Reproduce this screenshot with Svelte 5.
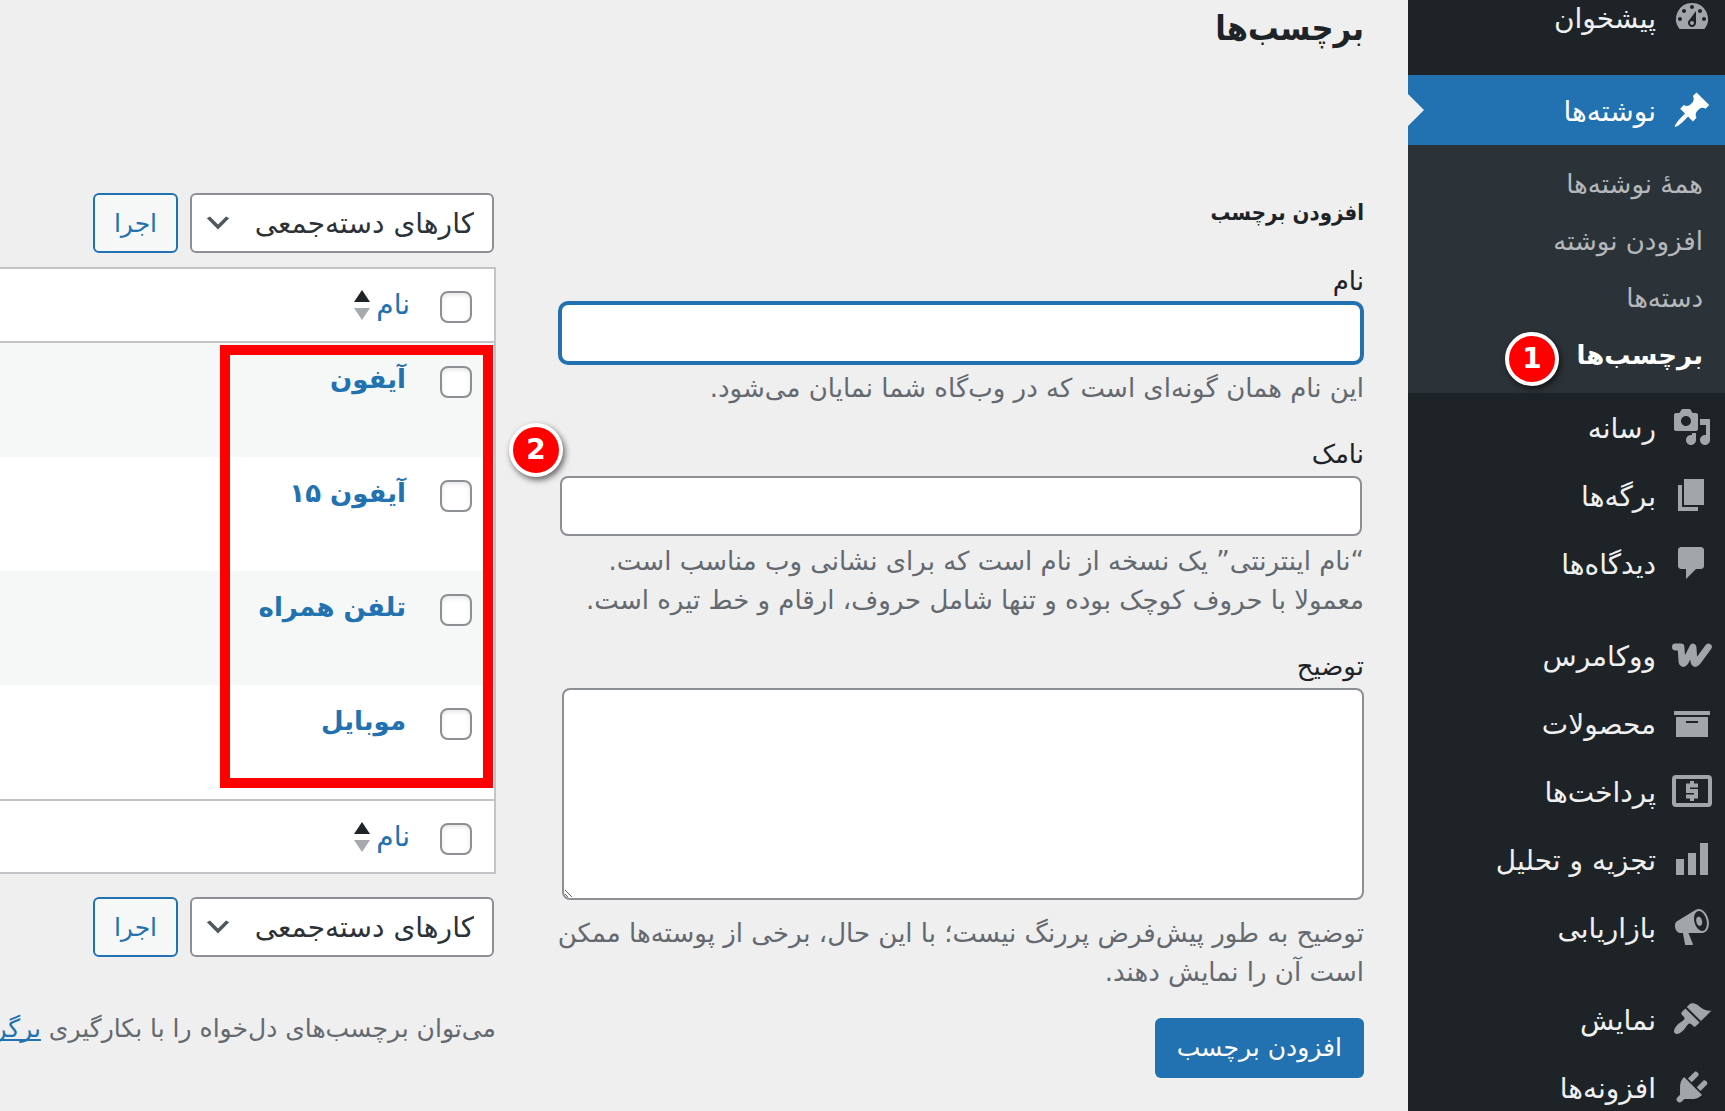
<script>
  const menu = [
    { label: "پیشخوان", icon: "dashboard" },
    { separator: true },
    {
      label: "نوشته‌ها",
      icon: "post",
      current: true,
      children: ["همهٔ نوشته‌ها", "افزودن نوشته", "دسته‌ها", "برچسب‌ها"],
    },
    { label: "رسانه", icon: "media" },
    { label: "برگه‌ها", icon: "page" },
    { label: "دیدگاه‌ها", icon: "comments" },
    { separator: true },
    { label: "ووکامرس", icon: "woo" },
    { label: "محصولات", icon: "archive" },
    { label: "پرداخت‌ها", icon: "payments" },
    { label: "تجزیه و تحلیل", icon: "chart" },
    { label: "بازاریابی", icon: "megaphone" },
    { separator: true },
    { label: "نمایش", icon: "appearance" },
    { label: "افزونه‌ها", icon: "plugins" },
  ]

  const currentChild = "برچسب‌ها"

  const icons = {
    dashboard: "M3.76 16h12.48A7.998 7.998 0 0 0 10 3a7.998 7.998 0 0 0-6.24 13zM10 4c.55 0 1 .45 1 1s-.45 1-1 1-1-.45-1-1 .45-1 1-1zM6 6c.55 0 1 .45 1 1s-.45 1-1 1-1-.45-1-1 .45-1 1-1zm8 0c.55 0 1 .45 1 1s-.45 1-1 1-1-.45-1-1 .45-1 1-1zm-5.37 5.55L12 7v6c0 1.1-.9 2-2 2s-2-.9-2-2c0-.57.24-1.08.63-1.45zM4 10c.55 0 1 .45 1 1s-.45 1-1 1-1-.45-1-1 .45-1 1-1zm12 0c.55 0 1 .45 1 1s-.45 1-1 1-1-.45-1-1 .45-1 1-1zm-5 3c0-.55-.45-1-1-1s-1 .45-1 1 .45 1 1 1 1-.45 1-1z",
    post: "M10.44 3.02l1.82-1.82 6.36 6.35-1.83 1.82c-1.05-.68-2.48-.57-3.41.36l-.75.75c-.92.93-1.04 2.35-.35 3.41l-1.83 1.82-2.41-2.41-2.8 2.79c-.42.42-3.38 2.71-3.8 2.29s1.86-3.39 2.28-3.81l2.79-2.79L4.1 9.36l1.83-1.82c1.05.69 2.48.57 3.4-.36l.75-.75c.93-.92 1.05-2.35.36-3.41z",
    media: "M13 11V4c0-.55-.45-1-1-1h-1.67L9 1H5L3.67 3H2c-.55 0-1 .45-1 1v7c0 .55.45 1 1 1h10c.55 0 1-.45 1-1zM7 4.5c1.38 0 2.5 1.12 2.5 2.5S8.38 9.5 7 9.5 4.5 8.38 4.5 7 5.62 4.5 7 4.5zM14 6h5v10.5c0 1.38-1.12 2.5-2.5 2.5S14 17.88 14 16.5s1.12-2.5 2.5-2.5c.17 0 .34.02.5.05V9h-3V6zm-4 8.05V13h2v3.5c0 1.38-1.12 2.5-2.5 2.5S7 17.88 7 16.5 8.12 14 9.5 14c.17 0 .34.02.5.05z",
    page: "M6 15V2h10v13H6zm-1 1h8v2H3V5h2v11z",
    comments: "M4.5 2h10c.83 0 1.5.67 1.5 1.5v8c0 .83-.67 1.5-1.5 1.5H12l-5 5v-5H4.5c-.83 0-1.5-.67-1.5-1.5v-8C3 2.67 3.67 2 4.5 2z",
    archive: "M19 4v2H1V4h18zM2 7h16v10H2V7zm11 3V9H7v1h6z",
    chart: "M18 18V2h-4v16h4zm-6 0V7H8v11h4zm-6 0v-8H2v8h4z",
    megaphone: "M18.15 5.94c.46 1.62.38 3.22-.02 4.48-.42 1.28-1.26 2.18-2.3 2.48-.16.06-.26.06-.4.06-.06.02-.12.02-.18.02-.06.02-.14.02-.22.02h-6.8l2.22 5.5c.02.14-.06.26-.14.34-.08.1-.24.16-.34.16H6.95c-.1 0-.26-.06-.34-.16-.08-.08-.16-.2-.14-.34l-1-5.5H4.25l-.02-.02c-.5.06-1.08-.18-1.54-.62s-.88-1.08-1.06-1.88c-.24-.8-.2-1.56-.02-2.2.18-.62.58-1.08 1.06-1.3l.02-.02 9-5.4c.1-.06.18-.1.24-.16.06-.04.14-.08.24-.12.16-.08.28-.12.5-.18 1.04-.3 2.24.1 3.22.98s1.84 2.24 2.26 3.86zm-2.58 5.98h-.02c.4-.1.74-.34 1.04-.7.58-.7.86-1.76.86-3.04 0-.64-.1-1.3-.28-1.98-.34-1.36-1.02-2.5-1.78-3.24s-1.68-1.1-2.46-.88c-.82.22-1.4.96-1.7 2-.32 1.04-.28 2.36.06 3.72.38 1.36 1 2.5 1.8 3.24.78.74 1.62 1.1 2.48.88zm-2.54-7.08c.22-.04.42-.02.62.04.38.16.76.48 1.02 1s.42 1.2.42 1.78c0 .3-.04.56-.12.8-.18.48-.44.84-.86.94-.34.1-.8-.06-1.14-.4s-.64-.86-.78-1.5c-.18-.62-.12-1.24.02-1.72s.48-.84.82-.94z",
    appearance: "M14.48 11.06L7.41 3.99l1.5-1.5c.5-.56 2.3-.47 3.51.32 1.21.8 1.43 1.28 2.91 2.1 1.18.64 2.45 1.26 4.45.85zm-.71.71L6.7 4.7 4.93 6.47c-.39.39-.39 1.02 0 1.41l1.06 1.06c.39.39.39 1.03 0 1.42-.6.6-1.43 1.11-2.21 1.69-.35.26-.7.53-1.01.84C1.43 14.23.4 16.08 1.4 17.07c.99 1 2.84-.03 4.18-1.36.31-.31.58-.66.85-1.02.57-.78 1.08-1.61 1.69-2.21.39-.39 1.02-.39 1.41 0l1.06 1.06c.39.39 1.02.39 1.41 0z",
    plugins: "M13.11 4.36L9.87 7.6 8 5.73l3.24-3.24c.35-.34 1.05-.2 1.56.32.52.51.66 1.21.31 1.55zm-8 1.77l.91-1.12 9.01 9.01-1.19.84c-.71.71-2.63 1.16-3.82 1.16H6.14L4.9 17.26c-.59.59-1.54.59-2.12 0a1.49 1.49 0 0 1 0-2.12l1.24-1.24v-3.88c0-1.13.4-3.19 1.09-3.89zm7.26 3.97l3.24-3.24c.34-.35 1.04-.21 1.55.31.52.51.66 1.21.31 1.55l-3.24 3.25z",
  }

  const tags = ["آیفون", "آیفون ۱۵", "تلفن همراه", "موبایل"]
</script>

{#snippet bulkActions()}
  <div class="bulk">
    <div class="select">
      <select aria-label="کارهای دسته‌جمعی">
        <option>کارهای دسته‌جمعی</option>
      </select>
      <svg viewBox="0 0 20 20"><path d="M5 6l5 5 5-5 2 1-7 7-7-7 2-1z" /></svg>
    </div>
    <button class="apply" type="button">اجرا</button>
  </div>
{/snippet}

{#snippet headRow()}
  <tr>
    <td class="check"><input type="checkbox" aria-label="گزینش همه" /></td>
    <th>
      <a class="sort" href="#sort">
        نام
        <svg viewBox="0 0 16 30">
          <path d="M8 0l8 12H0z" fill="#1d2327" />
          <path d="M0 18h16L8 30z" fill="#a7aaad" />
        </svg>
      </a>
    </th>
  </tr>
{/snippet}

<div class="page" dir="rtl" lang="fa">
  <nav>
    {#each menu as item}
      {#if item.separator}
        <div class="separator"></div>
      {:else}
        <a class="item" class:current={item.current} href="#menu">
          <svg viewBox="0 0 20 20">
            {#if item.icon == "woo"}
              <path class="line" d="M1.7 6H4.5L5 13.5Q5.5 15 6.6 13.5L10.5 6 11 13.5Q11.5 15 12.7 13.5L18.2 6" />
            {:else if item.icon == "payments"}
              <rect class="frame" x="1" y="3" width="18" height="14" rx="1" />
              <path class="dollar" d="M13 7.3H8V10h4v2.7H7M10 5v2M10 13v2" />
            {:else}
              <path d={icons[item.icon]} />
            {/if}
          </svg>
          <span>{item.label}</span>
        </a>
        {#if item.children}
          <ul>
            {#each item.children as child}
              <li>
                <a href="#sub" class:active={child == currentChild}>{child}</a>
                {#if child == currentChild}
                  <span class="badge">1</span>
                {/if}
              </li>
            {/each}
          </ul>
        {/if}
      {/if}
    {/each}
  </nav>

  <main>
    <h1>برچسب‌ها</h1>

    <div class="columns">
      <form>
        <h2>افزودن برچسب</h2>

        <div class="field">
          <label for="tag-name">نام</label>
          <input id="tag-name" class="focused" type="text" />
          <p>این نام همان گونه‌ای است که در وب‌گاه شما نمایان می‌شود.</p>
        </div>

        <div class="field">
          <label for="tag-slug">نامک</label>
          <input id="tag-slug" type="text" />
          <p>
            “نام اینترنتی” یک نسخه از نام است که برای نشانی وب مناسب است.<br />
            معمولا با حروف کوچک بوده و تنها شامل حروف، ارقام و خط تیره است.
          </p>
        </div>

        <div class="field">
          <label for="tag-description">توضیح</label>
          <textarea id="tag-description"></textarea>
          <p>توضیح به طور پیش‌فرض پررنگ نیست؛ با این حال، برخی از پوسته‌ها ممکن است آن را نمایش دهند.</p>
        </div>

        <button class="primary" type="button">افزودن برچسب</button>
      </form>

      <section>
        {@render bulkActions()}

        <div class="list">
          <table>
            <thead>{@render headRow()}</thead>
            <tbody>
              {#each tags as tag}
                <tr>
                  <td class="check"><input type="checkbox" aria-label={tag} /></td>
                  <td><a class="tag" href="#tag">{tag}</a></td>
                </tr>
              {/each}
            </tbody>
            <tfoot>{@render headRow()}</tfoot>
          </table>
          <div class="highlight"></div>
          <span class="badge">2</span>
        </div>

        {@render bulkActions()}

        <p class="note">می‌توان برچسب‌های دل‌خواه را با بکارگیری <a href="#convert">برگردان</a></p>
      </section>
    </div>
  </main>
</div>

<style>
  :global(body) {
    background: #efefef;
    overflow: hidden;
  }

  .page {
    display: flex;
    height: 100vh;
    overflow: hidden;
    background: #efefef;
    color: #1d2327;
    font-family: "DejaVu Sans", sans-serif;
    font-size: 26px;
    line-height: 40px;
  }

  .page * {
    box-sizing: border-box;
  }

  a {
    color: #2271b1;
    text-decoration: none;
  }

  input, textarea, select, button {
    font: inherit;
    color: inherit;
  }

  /* Admin menu */
  nav {
    flex: 0 0 317px;
    margin-top: -17px;
    background: #1d2327;
  }

  .separator {
    height: 24px;
  }

  .item {
    position: relative;
    display: flex;
    align-items: center;
    gap: 16px;
    height: 68px;
    padding: 0 13px;
    color: #f0f0f1;
    font-size: 28px;
  }

  .item span {
    padding-top: 4px;
  }

  .item svg {
    width: 40px;
    height: 40px;
    fill: #a2a6ab;
  }

  .item .line, .item .frame, .item .dollar {
    fill: none;
    stroke: #a2a6ab;
    stroke-width: 2;
  }

  .item .line {
    stroke-width: 3.4;
    stroke-linecap: round;
    stroke-linejoin: round;
  }

  .item.current {
    height: 70px;
    background: #2271b1;
    color: #fff;
  }

  .item.current svg {
    fill: #fff;
  }

  .item.current::after {
    content: "";
    position: absolute;
    left: 0;
    border: 16px solid transparent;
    border-left-color: #efefef;
    border-right-width: 0;
  }

  ul {
    margin: 0;
    padding: 10px 22px;
    list-style: none;
    background: #2c3338;
  }

  li {
    position: relative;
    display: flex;
    align-items: center;
    height: 57px;
  }

  li a {
    color: #b4b8bc;
  }

  li a.active {
    color: #fff;
    font-weight: bold;
  }

  .badge {
    position: absolute;
    display: grid;
    place-content: center;
    width: 54px;
    height: 54px;
    border: 4px solid #fff;
    border-radius: 50%;
    background: #f00;
    box-shadow: 2px 3px 6px rgba(0, 0, 0, 0.6);
    color: #fff;
    font-size: 28px;
    font-weight: bold;
  }

  li .badge {
    top: 6px;
    left: 75px;
  }

  /* Content */
  main {
    flex: 1;
    min-width: 0;
    padding-right: 44px;
  }

  h1 {
    margin: 0;
    padding: 4px 0;
    font-family: "DejaVu Sans Condensed", "DejaVu Sans", sans-serif;
    font-size: 34px;
    line-height: 48px;
  }

  h2 {
    margin: 0 0 28px;
    font-family: "DejaVu Sans Condensed", "DejaVu Sans", sans-serif;
    font-size: 22px;
    line-height: 40px;
  }

  .columns {
    display: grid;
    grid-template-columns: minmax(0, 13fr) minmax(0, 8fr);
    gap: 62px;
    margin-top: 137px;
  }

  form {
    padding-left: 2px;
  }

  .field {
    margin-bottom: 26px;
  }

  .field label {
    display: block;
  }

  .field input, textarea {
    display: block;
    border: 2px solid #8c8f94;
    border-radius: 8px;
    background: #fff;
  }

  .field input {
    width: calc(100% - 2px);
    height: 60px;
    margin: 2px;
  }

  .field input.focused {
    border-color: #2271b1;
    box-shadow: 0 0 0 2px #2271b1;
  }

  textarea {
    width: calc(100% - 2px);
    height: 212px;
    margin: 2px 0 10px;
  }

  .field p {
    margin: 0 0 0 -8px;
    padding-top: 4px;
    color: #646970;
    line-height: 39px;
  }

  .primary {
    height: 60px;
    padding: 0 22px;
    border: 0;
    border-radius: 6px;
    background: #2271b1;
    color: #fff;
    font-size: 25px;
  }

  .bulk {
    display: flex;
    gap: 12px;
    padding: 0 2px;
  }

  .select {
    position: relative;
  }

  .select select {
    width: 304px;
    height: 60px;
    padding: 2px 18px 0;
    border: 2px solid #8c8f94;
    border-radius: 6px;
    appearance: none;
    background: #fff;
    color: #2c3338;
    font-size: 28px;
  }

  .select svg {
    position: absolute;
    top: 14px;
    left: 12px;
    width: 32px;
    fill: #50575e;
    pointer-events: none;
  }

  .apply {
    width: 85px;
    height: 60px;
    padding: 2px 0 0;
    border: 2px solid #2271b1;
    border-radius: 6px;
    background: #f6f7f7;
    color: #2271b1;
    font-size: 25px;
  }

  .list {
    position: relative;
    margin: 14px 0 23px;
  }

  table {
    width: 100%;
    border: 2px solid #c3c4c7;
    border-left: 0;
    border-spacing: 0;
    background: #fff;
  }

  td, th {
    padding: 0;
    text-align: right;
    font-size: 28px;
    font-weight: normal;
  }

  thead td, thead th {
    height: 74px;
    border-bottom: 2px solid #c3c4c7;
  }

  tfoot td, tfoot th {
    height: 73px;
    border-top: 2px solid #c3c4c7;
  }

  tbody td {
    height: 114px;
    padding: 16px 4px;
    font-size: 26px;
    vertical-align: top;
  }

  tbody tr:nth-child(odd) {
    background: #f6f7f7;
  }

  .check, tbody .check {
    width: 84px;
    padding-top: 4px;
    padding-right: 22px;
  }

  tbody .check {
    padding-top: 23px;
  }

  .check input {
    display: block;
    width: 32px;
    height: 32px;
    margin: 0;
    border: 2px solid #8c8f94;
    border-radius: 8px;
    appearance: none;
    background: #fff;
    box-shadow: inset 0 2px 4px rgba(0, 0, 0, 0.1);
  }

  .sort {
    display: flex;
    align-items: center;
    gap: 6px;
  }

  .sort svg {
    width: 16px;
    height: 30px;
  }

  .tag {
    font-weight: bold;
  }

  /* Callout round the tag names */
  .highlight {
    position: absolute;
    top: 78px;
    right: 3px;
    width: 273px;
    height: 443px;
    border: 10px solid #f00;
    pointer-events: none;
  }

  .list .badge {
    top: 156px;
    right: -67px;
  }

  .note {
    margin: 52px 0 0;
    color: #646970;
    font-size: 25px;
    white-space: nowrap;
  }

  .note a {
    text-decoration: underline;
    text-decoration-skip-ink: none;
  }
</style>
